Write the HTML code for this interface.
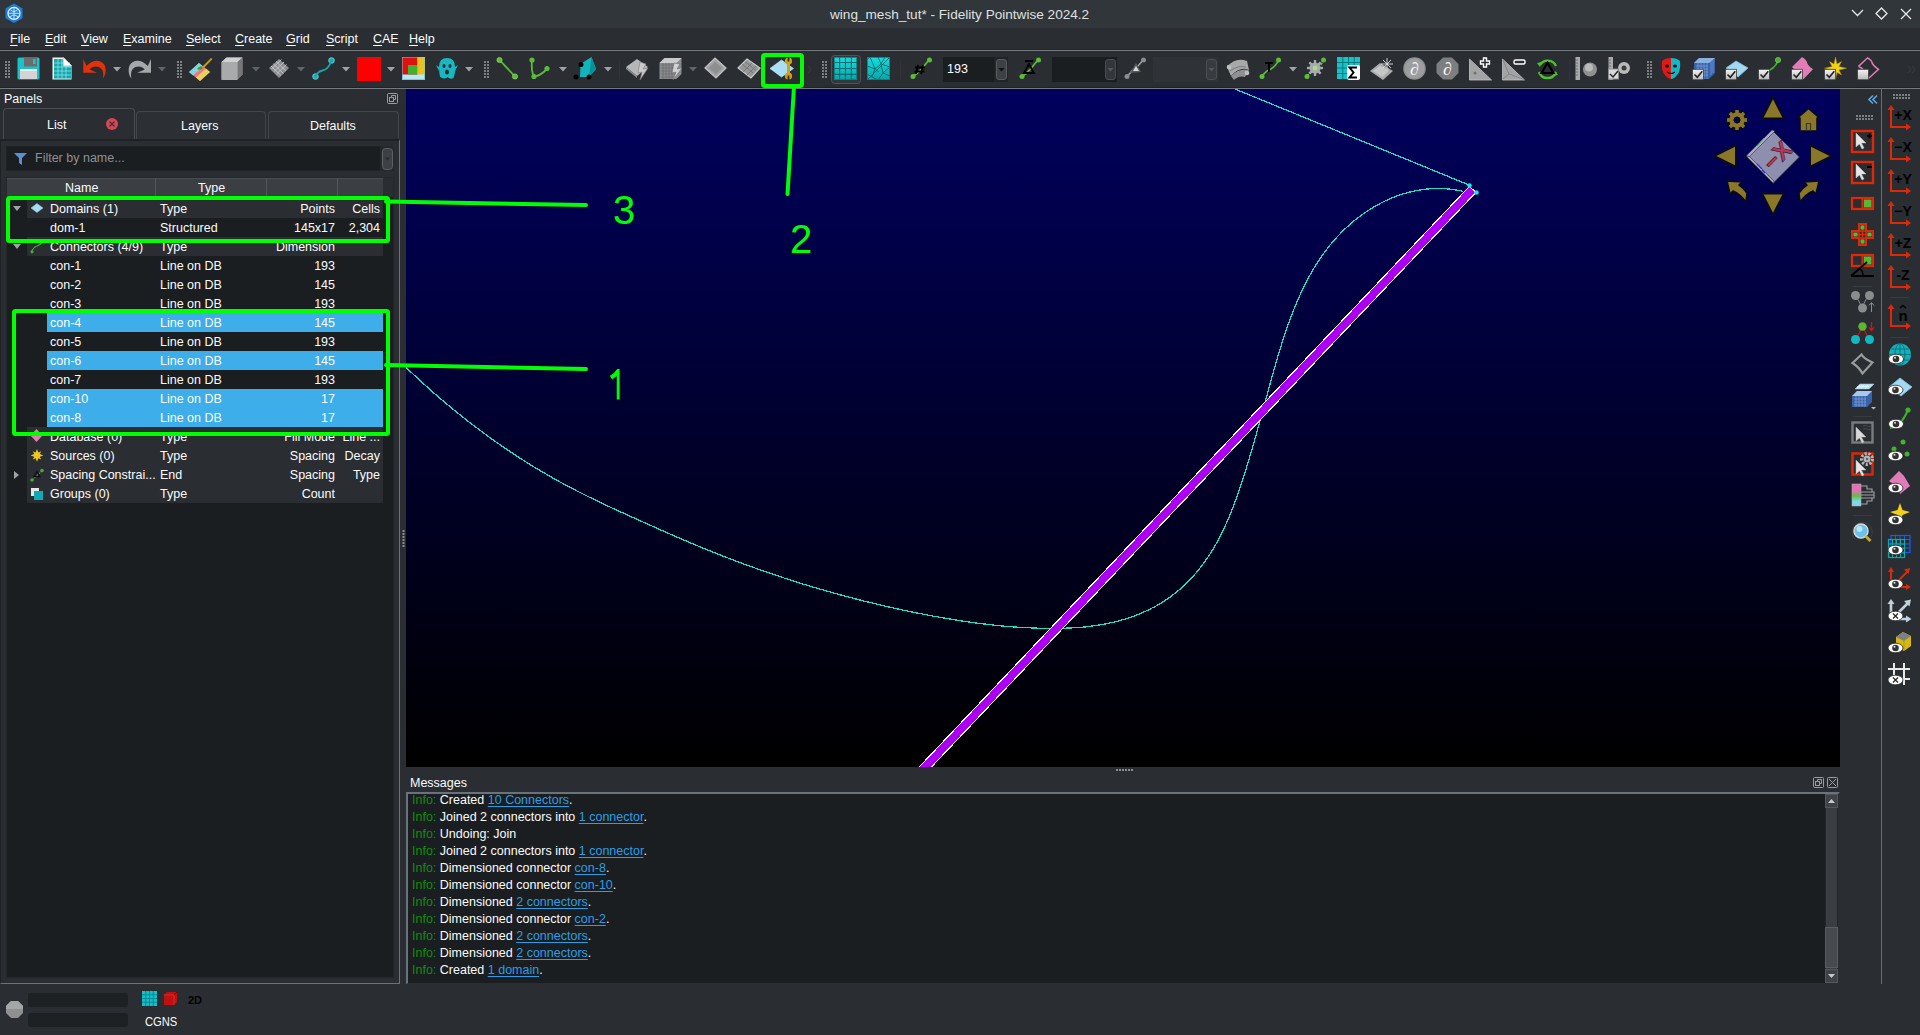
<!DOCTYPE html><html><head><meta charset="utf-8"><style>
*{margin:0;padding:0;box-sizing:border-box}
html,body{width:1920px;height:1035px;overflow:hidden;background:#2a2e32;font-family:"Liberation Sans", sans-serif;color:#fcfcfc;font-size:12.5px}
.a{position:absolute}
.t{position:absolute;white-space:nowrap;line-height:13px}
svg{position:absolute;overflow:visible}
.r{text-align:right}
</style></head><body><div class="a" style="left:0;top:0;width:1920px;height:28px;background:#31363b"></div>
<div class="t" style="left:830px;top:8px;font-size:13.6px;color:#dfe0e1">wing_mesh_tut* - Fidelity Pointwise 2024.2</div>
<svg style="left:0;top:0" width="1920" height="28">
<path d="M1852 10 l5.5 5.5 l5.5 -5.5" fill="none" stroke="#e8e8e8" stroke-width="1.3"/>
<path d="M1881.5 8 l5.5 5.5 l-5.5 5.5 l-5.5 -5.5 z" fill="none" stroke="#e8e8e8" stroke-width="1.3"/>
<path d="M1901 9 l10 10 M1911 9 l-10 10" fill="none" stroke="#e8e8e8" stroke-width="1.3"/>
<path d="M14 3.5 l8.5 4.9 v9.8 l-8.5 4.9 l-8.5 -4.9 v-9.8 z" fill="#1e7fd8"/>
<circle cx="14" cy="13.3" r="6" fill="none" stroke="#e6f2ff" stroke-width="1.2"/>
<path d="M8.5 13.3 h11 M14 7.3 v12 M10 9.5 q4 4 8 0 M10 17 q4 -4 8 0" fill="none" stroke="#e6f2ff" stroke-width="0.8"/>
</svg>
<div class="a" style="left:0;top:28px;width:1920px;height:22px;background:#2a2e32"></div>
<div class="t" style="left:10px;top:33px;font-size:12.5px"><u style="text-underline-offset:2px">F</u>ile</div>
<div class="t" style="left:45px;top:33px;font-size:12.5px"><u style="text-underline-offset:2px">E</u>dit</div>
<div class="t" style="left:81px;top:33px;font-size:12.5px"><u style="text-underline-offset:2px">V</u>iew</div>
<div class="t" style="left:123px;top:33px;font-size:12.5px"><u style="text-underline-offset:2px">E</u>xamine</div>
<div class="t" style="left:186px;top:33px;font-size:12.5px"><u style="text-underline-offset:2px">S</u>elect</div>
<div class="t" style="left:235px;top:33px;font-size:12.5px"><u style="text-underline-offset:2px">C</u>reate</div>
<div class="t" style="left:286px;top:33px;font-size:12.5px"><u style="text-underline-offset:2px">G</u>rid</div>
<div class="t" style="left:326px;top:33px;font-size:12.5px"><u style="text-underline-offset:2px">S</u>cript</div>
<div class="t" style="left:373px;top:33px;font-size:12.5px"><u style="text-underline-offset:2px">C</u>AE</div>
<div class="t" style="left:409px;top:33px;font-size:12.5px"><u style="text-underline-offset:2px">H</u>elp</div>
<div class="a" style="left:0;top:49px;width:1920px;height:1px;background:#222428"></div><div class="a" style="left:0;top:50px;width:1920px;height:1px;background:#74797d"></div>
<div class="a" style="left:0;top:51px;width:1920px;height:37px;background:#2a2e32"></div>
<div class="a" style="left:0;top:87px;width:1920px;height:1px;background:#1f2124"></div><div class="a" style="left:0;top:88px;width:1920px;height:1px;background:#74797d"></div>
<svg style="left:0;top:0" width="1920" height="90"><defs><linearGradient id="tg" x1="0" y1="0" x2="0" y2="1"><stop offset="0" stop-color="#14dede"/><stop offset="1" stop-color="#0aa4a8"/></linearGradient><linearGradient id="chkg" x1="0" y1="0" x2="0" y2="1"><stop offset="0" stop-color="#f4f4f4"/><stop offset="1" stop-color="#b8b8b8"/></linearGradient></defs><rect x="5" y="61" width="2" height="2" fill="#7d8083"/><rect x="8" y="61" width="2" height="2" fill="#7d8083"/><rect x="5" y="64" width="2" height="2" fill="#7d8083"/><rect x="8" y="64" width="2" height="2" fill="#7d8083"/><rect x="5" y="67" width="2" height="2" fill="#7d8083"/><rect x="8" y="67" width="2" height="2" fill="#7d8083"/><rect x="5" y="70" width="2" height="2" fill="#7d8083"/><rect x="8" y="70" width="2" height="2" fill="#7d8083"/><rect x="5" y="73" width="2" height="2" fill="#7d8083"/><rect x="8" y="73" width="2" height="2" fill="#7d8083"/><rect x="5" y="76" width="2" height="2" fill="#7d8083"/><rect x="8" y="76" width="2" height="2" fill="#7d8083"/><g transform="translate(17,57)"><rect x="0.5" y="0.5" width="22" height="22" rx="1.5" fill="#17c4c9"/>
<rect x="7" y="0.5" width="13" height="9" fill="#6c6c6c"/><rect x="16" y="2" width="2.5" height="5" fill="#17c4c9"/>
<rect x="3" y="12" width="17" height="10" fill="#d4d4d4"/><rect x="3" y="12" width="17" height="2" fill="#f0f0f0"/></g><g transform="translate(52,57)"><path d="M0.5 0.5 h11 l8 8 v14 h-19 z" fill="#f2f2f2"/>
<path d="M2 2 h9.5 v7.5 h7.5 v12 h-17 z" fill="#12a8b0"/>
<path d="M2 6 h16 M2 10 h17 M2 14 h17 M2 18 h17 M6 2 v20 M10 2 v20 M14 9 v13" stroke="#8fe0e6" stroke-width="0.8"/>
<path d="M11.5 0.5 v8 h8" fill="#ffffff" stroke="#cfcfcf" stroke-width="0.6"/></g><g transform="translate(83,57)"><path d="M0.3 2 L0.3 15.8 L14.1 15.8 L6.5 12.5 C 9.5 9, 15 8.5, 18.5 12 C 20.5 14, 20.5 18, 20 21.5 C 22.8 18, 23.5 12, 21.5 8 C 18.5 2.5, 10 1.5, 3.5 9 Z" fill="#e4300c"/></g><path d="M113 67 h8 l-4 4.5 z" fill="#a0a2a4"/><g transform="translate(128,57)"><g transform="translate(23.3,0) scale(-1,1)"><path d="M0.3 2 L0.3 15.8 L14.1 15.8 L6.5 12.5 C 9.5 9, 15 8.5, 18.5 12 C 20.5 14, 20.5 18, 20 21.5 C 22.8 18, 23.5 12, 21.5 8 C 18.5 2.5, 10 1.5, 3.5 9 Z" fill="#a6a9ac"/></g></g><path d="M158 67 h8 l-4 4.5 z" fill="#5f6469"/><rect x="177" y="61" width="2" height="2" fill="#7d8083"/><rect x="180" y="61" width="2" height="2" fill="#7d8083"/><rect x="177" y="64" width="2" height="2" fill="#7d8083"/><rect x="180" y="64" width="2" height="2" fill="#7d8083"/><rect x="177" y="67" width="2" height="2" fill="#7d8083"/><rect x="180" y="67" width="2" height="2" fill="#7d8083"/><rect x="177" y="70" width="2" height="2" fill="#7d8083"/><rect x="180" y="70" width="2" height="2" fill="#7d8083"/><rect x="177" y="73" width="2" height="2" fill="#7d8083"/><rect x="180" y="73" width="2" height="2" fill="#7d8083"/><rect x="177" y="76" width="2" height="2" fill="#7d8083"/><rect x="180" y="76" width="2" height="2" fill="#7d8083"/><g transform="translate(189,57)"><path d="M0 15 l10 -9 l11 9 l-10 9 z" fill="#f07878"/>
<path d="M0 15 l10 -9 l4 3.5 l-10 9 z" fill="#7ad8e0"/>
<path d="M11 24 l10 -9 l-4 -3.5 l-10 9 z" fill="#e8d060"/>
<path d="M8 12 q3 -4 6 -2 q-1 4 -6 2z" fill="#36a030"/>
<path d="M13 10 l9 -9 l1.5 1 l-9 9.5z" fill="#c89a20"/></g><g transform="translate(221,57)"><path d="M0.5 5 l5 -4.5 h16 v17 l-5 5 h-16 z" fill="#8e9092"/>
<path d="M0.5 5 l5 -4.5 h16 l-5 4.5 z" fill="#d0d2d4"/>
<path d="M16.5 5 l5 -4.5 v17 l-5 5 z" fill="#75777a"/>
<rect x="0.5" y="5" width="16" height="18" fill="#a8aaac"/></g><path d="M252 67 h8 l-4 4.5 z" fill="#5f6469"/><g transform="translate(268,57)"><path d="M1 11 l10 -9 l10 9 l-10 10 z" fill="#8b8d90"/>
<path d="M5.5 7 l10 9.5 M8 4.5 l10 9.5 M3 9 l10 9.5 M6 14.5 l10 -9.5 M3.5 12 l10 -9.5 M8.5 17 l10 -9.5" stroke="#c8cacc" stroke-width="0.9"/></g><path d="M297 67 h8 l-4 4.5 z" fill="#5f6469"/><g transform="translate(312,57)"><circle cx="19.5" cy="3.5" r="2.8" fill="#10b0b8" stroke="#7fe0e4" stroke-width="0.8"/><circle cx="3.5" cy="19.5" r="2.8" fill="#10b0b8" stroke="#7fe0e4" stroke-width="0.8"/>
<path d="M3.5 19.5 q2 -5 7 -6 q6 -1 9 -10" fill="none" stroke="#10a8b0" stroke-width="1.8"/></g><path d="M342 67 h8 l-4 4.5 z" fill="#a0a2a4"/><g transform="translate(357,57)"><rect x="0" y="0" width="24" height="24" fill="#ff0000"/></g><path d="M387 67 h8 l-4 4.5 z" fill="#a0a2a4"/><g transform="translate(402,57)"><rect x="0.5" y="0.5" width="22" height="22" fill="#b8e8f8" stroke="#7cc8e0"/>
<rect x="0.5" y="0.5" width="15" height="17" fill="#e01010"/><rect x="15.5" y="0.5" width="7" height="17" fill="#e8c020"/>
<rect x="6" y="8" width="9" height="9.5" fill="#40b030"/></g><g transform="translate(435,57)"><path d="M5 20 q-1 -6 -1 -10 q0 -9 8 -9 q8 0 8 9 l3 -2 l-2.5 5 q-1 5 -2 8 q-3 2 -6 -1 q-3 3 -7 0z" fill="#18b8c0"/>
<path d="M4 10 l-3 -2 l3 6z" fill="#18b8c0"/>
<ellipse cx="9" cy="9" rx="1.5" ry="2" fill="#1f2a30"/><ellipse cx="15" cy="9" rx="1.5" ry="2" fill="#1f2a30"/><ellipse cx="12" cy="15" rx="2" ry="2.5" fill="#1f2a30"/></g><path d="M465 67 h8 l-4 4.5 z" fill="#a0a2a4"/><rect x="484" y="61" width="2" height="2" fill="#7d8083"/><rect x="487" y="61" width="2" height="2" fill="#7d8083"/><rect x="484" y="64" width="2" height="2" fill="#7d8083"/><rect x="487" y="64" width="2" height="2" fill="#7d8083"/><rect x="484" y="67" width="2" height="2" fill="#7d8083"/><rect x="487" y="67" width="2" height="2" fill="#7d8083"/><rect x="484" y="70" width="2" height="2" fill="#7d8083"/><rect x="487" y="70" width="2" height="2" fill="#7d8083"/><rect x="484" y="73" width="2" height="2" fill="#7d8083"/><rect x="487" y="73" width="2" height="2" fill="#7d8083"/><rect x="484" y="76" width="2" height="2" fill="#7d8083"/><rect x="487" y="76" width="2" height="2" fill="#7d8083"/><g transform="translate(496,57)"><path d="M3.5 3 L19 19.5" stroke="#5dbb3a" stroke-width="1.8"/><circle cx="3.5" cy="3" r="2.6" fill="#5dbb3a" stroke="#9ee07a" stroke-width="0.6"/><circle cx="19" cy="19.5" r="2.6" fill="#5dbb3a" stroke="#9ee07a" stroke-width="0.6"/></g><g transform="translate(529,57)"><path d="M3 3 Q2 15 5 19 Q10 20 18 12" fill="none" stroke="#5dbb3a" stroke-width="1.8"/><circle cx="3" cy="3" r="2.6" fill="#5dbb3a"/><circle cx="5" cy="19.5" r="2.6" fill="#5dbb3a"/><circle cx="18" cy="11.5" r="2.6" fill="#5dbb3a"/></g><path d="M559 67 h8 l-4 4.5 z" fill="#a0a2a4"/><g transform="translate(574,57)"><path d="M6.5 7 l11 -7 l4.5 12 l-7 8 h-9z" fill="#12b4bc"/><path d="M17.5 0 l4.5 12 l-7 8z" fill="#0a8f98"/>
<circle cx="7" cy="7.5" r="2.5" fill="#000"/><circle cx="2" cy="20" r="2.5" fill="#000"/><circle cx="15" cy="20" r="2.5" fill="#000"/></g><path d="M604 67 h8 l-4 4.5 z" fill="#a0a2a4"/><rect x="619" y="60" width="1" height="19" fill="#303337"/><g transform="translate(626,57)"><path d="M0 10 l11 -8 l11 8 l-11 9 z" fill="#b4b6b8"/><path d="M0 10 l11 9 v2 l-11 -9z" fill="#8a8c8e"/>
<path d="M14 5 l6 2 l-3 5 l5 -1 l-8 12 l2 -8 l-4 1z" fill="#c8cacc" stroke="#7a7c7e" stroke-width="0.6"/></g><g transform="translate(659,57)"><path d="M0.5 6 l5 -5 h17 v16 l-5 5 h-17z" fill="#8a8c8e"/><path d="M0.5 6 l5 -5 h17 l-5 5z" fill="#c8cacc"/>
<path d="M2 8 h14 M2 11 h14 M2 14 h14 M2 17 h14 M2 20 h14 M4 6 v16 M7 6 v16 M10 6 v16 M13 6 v16" stroke="#6a6c6e" stroke-width="0.7"/>
<path d="M15 6 l6 1 l-3 5 l5 -1 l-9 12 l3 -8 l-4 1z" fill="#d0d2d4" stroke="#6a6c6e" stroke-width="0.6"/></g><path d="M689 67 h8 l-4 4.5 z" fill="#5f6469"/><g transform="translate(705,57)"><path d="M0 11 l10 -10 l11 10 l-10 10 z" fill="#a0a2a4" stroke="#c2c4c6" stroke-width="1.2"/><path d="M4 11 l6 -6 l7 6 l-6 6z" fill="#8c8e90"/></g><g transform="translate(738,57)"><path d="M0 11 l9 -9 l13 9 l-9 10 z" fill="#959799" stroke="#c8cacc" stroke-width="1.2"/>
<path d="M4 7 l11 9 M7 4.5 l11 9 M5 15 l9 -9 M9 18 l9 -9" stroke="#6e7072" stroke-width="0.8"/></g><g transform="translate(770,57)"><path d="M0 11.5 l11.5 -8.5 l12 8.5 l-12 8.5 z" fill="#a8dff4" stroke="#c8ecfa" stroke-width="0.6"/>
<rect x="17" y="6" width="3" height="11" fill="#d4a010"/>
<circle cx="18.5" cy="4" r="3.6" fill="#d4a010"/><circle cx="18.5" cy="19" r="3.6" fill="#d4a010"/>
<rect x="17.6" y="0" width="1.8" height="4.5" fill="#2a2e32"/><rect x="17.6" y="18.5" width="1.8" height="5" fill="#2a2e32"/></g><rect x="822" y="61" width="2" height="2" fill="#7d8083"/><rect x="825" y="61" width="2" height="2" fill="#7d8083"/><rect x="822" y="64" width="2" height="2" fill="#7d8083"/><rect x="825" y="64" width="2" height="2" fill="#7d8083"/><rect x="822" y="67" width="2" height="2" fill="#7d8083"/><rect x="825" y="67" width="2" height="2" fill="#7d8083"/><rect x="822" y="70" width="2" height="2" fill="#7d8083"/><rect x="825" y="70" width="2" height="2" fill="#7d8083"/><rect x="822" y="73" width="2" height="2" fill="#7d8083"/><rect x="825" y="73" width="2" height="2" fill="#7d8083"/><rect x="822" y="76" width="2" height="2" fill="#7d8083"/><rect x="825" y="76" width="2" height="2" fill="#7d8083"/><rect x="831.5" y="55.5" width="29" height="28" rx="3" fill="#33363a" stroke="#505458"/><g transform="translate(834,57)"><rect x="0" y="0" width="23" height="23" fill="url(#tg)"/><path d="M5.6 0 v23 M11.5 0 v23 M17.4 0 v23 M0 5.5 h23 M0 11.5 h23 M0 17.4 h23" stroke="#086c72" stroke-width="1.1"/><rect x="0.5" y="0.5" width="22" height="22" fill="none" stroke="#0a7a80" stroke-width="0.8"/></g><g transform="translate(867,57)"><rect x="0" y="0" width="23" height="23" fill="url(#tg)"/><path d="M0 23 L23 0 M3 0 L8 12 L0 9 M8 12 L14 7 L11 0 M14 7 L23 10 M14 7 L16 16 L23 10 M16 16 L11 23 M16 16 L23 19 M8 12 L5 20 L0 17 M5 20 L11 23 M8 12 L12 15 M18 0 L14 7 M0 3 L3 0" fill="none" stroke="#086c72" stroke-width="0.9"/><rect x="0.5" y="0.5" width="22" height="22" fill="none" stroke="#0a7a80" stroke-width="0.8"/></g><rect x="900" y="60" width="1" height="19" fill="#303337"/><g transform="translate(910,57)"><path d="M3 19.5 q5 -3 9 -8 q4 -5 7 -8.5" fill="none" stroke="#5dbb3a" stroke-width="1.8"/><circle cx="19.5" cy="3" r="2.5" fill="#5dbb3a"/><circle cx="3" cy="19.5" r="2.5" fill="#5dbb3a"/>
<path d="M8 8 l-2 9 M13 8 l-2 9 M5 10.5 h10 M4.5 14.5 h10" stroke="#000" stroke-width="1.8"/></g><g transform="translate(1019,57)"><path d="M3 19.5 q5 -3 9 -8 q4 -5 7 -8.5" fill="none" stroke="#5dbb3a" stroke-width="1.8"/><circle cx="19.5" cy="3" r="2.5" fill="#5dbb3a"/><circle cx="3" cy="19.5" r="2.5" fill="#5dbb3a"/>
<path d="M6 4 h8 M10 7 l-5 9 h10z" fill="none" stroke="#000" stroke-width="1.8"/></g><g transform="translate(1124,57)"><path d="M3 19.5 q4 -4 6 -7 M13 10 q3 -3 6 -7" fill="none" stroke="#9a9c9e" stroke-width="1.6"/><circle cx="19.5" cy="3" r="2.5" fill="#8a8c8e"/><circle cx="3" cy="19.5" r="2.5" fill="#8a8c8e"/>
<path d="M6 16 l6 -10 l5 9z" fill="#585b5e"/><path d="M9 14 l3 -5 l3 5z" fill="#d8d8d8"/></g><g transform="translate(1226,57)"><path d="M1 10 q8 -10 20 -6 l2 9 q-9 -4 -18 6z" fill="#a6a8aa"/><path d="M5 19 q8 -8 18 -6 l-4 7 q-6 -2 -11 3z" fill="#8e9092"/>
<circle cx="3" cy="10" r="2.3" fill="#bcbec0"/><circle cx="21" cy="16" r="2.3" fill="#bcbec0"/><path d="M4 14 q8 -6 16 -4" fill="none" stroke="#6e7072" stroke-width="0.8"/></g><g transform="translate(1259,57)"><path d="M3 19.5 q3 -5 8 -7 q6 -3 8.5 -9.5" fill="none" stroke="#5dbb3a" stroke-width="1.8"/><circle cx="19.5" cy="3" r="2.5" fill="#5dbb3a"/><circle cx="3" cy="19.5" r="2.5" fill="#5dbb3a"/>
<path d="M6 6 h8 M10 6 v9" stroke="#000" stroke-width="2"/></g><path d="M1289 67 h8 l-4 4.5 z" fill="#a0a2a4"/><g transform="translate(1304,57)"><path d="M3 19.5 q3 -5 8 -7 q6 -3 8.5 -9.5" fill="none" stroke="#5dbb3a" stroke-width="1.6" stroke-dasharray="3 1.5"/><circle cx="19.5" cy="3" r="2.5" fill="#5dbb3a"/><circle cx="3" cy="19.5" r="2.5" fill="#5dbb3a"/>
<rect x="9.8" y="3" width="2.4" height="4" transform="rotate(0 11 11)" fill="#a8aaac"/><rect x="9.8" y="3" width="2.4" height="4" transform="rotate(45 11 11)" fill="#a8aaac"/><rect x="9.8" y="3" width="2.4" height="4" transform="rotate(90 11 11)" fill="#a8aaac"/><rect x="9.8" y="3" width="2.4" height="4" transform="rotate(135 11 11)" fill="#a8aaac"/><rect x="9.8" y="3" width="2.4" height="4" transform="rotate(180 11 11)" fill="#a8aaac"/><rect x="9.8" y="3" width="2.4" height="4" transform="rotate(225 11 11)" fill="#a8aaac"/><rect x="9.8" y="3" width="2.4" height="4" transform="rotate(270 11 11)" fill="#a8aaac"/><rect x="9.8" y="3" width="2.4" height="4" transform="rotate(315 11 11)" fill="#a8aaac"/><circle cx="11" cy="11" r="5.5" fill="#a8aaac"/><circle cx="11" cy="11" r="2.3" fill="#a8e090"/></g><g transform="translate(1337,57)"><rect x="0" y="0" width="23" height="22" fill="#15c2c8"/><path d="M5.75 0 v22 M11.5 0 v22 M17.25 0 v22 M0 5.5 h23 M0 11 h23 M0 16.5 h23" stroke="#0a7a82" stroke-width="1"/>
<rect x="10" y="8" width="13" height="15" rx="2" fill="#ffffff"/><path d="M20 10.5 h-7.5 l4 5 l-4 5 h7.5" fill="none" stroke="#000" stroke-width="2"/></g><g transform="translate(1370,57)"><path d="M0 14 l10 -8 l13 8 l-10 9 z" fill="#a8aaac"/><path d="M3 14 l7 -5.5 l9 5.5 l-7 6z" fill="#c4c6c8"/>
<path d="M17 1 v12 M11 7 h12 M13 3 l8 8 M21 3 l-8 8" stroke="#e0e2e4" stroke-width="0.9"/></g><g transform="translate(1403,57)"><circle cx="11.5" cy="11.5" r="11.3" fill="#8c8e90"/><circle cx="11.5" cy="11.5" r="10" fill="#9c9ea0"/>
<text x="11.5" y="18" font-family="Liberation Serif" font-style="italic" font-size="18" text-anchor="middle" fill="#f4f4f4">∂</text></g><g transform="translate(1436,57)"><path d="M7 0.5 h9 l6.5 6.5 v9 l-6.5 6.5 h-9 l-6.5 -6.5 v-9z" fill="#7c7e80"/>
<text x="11.5" y="18" font-family="Liberation Serif" font-style="italic" font-size="18" text-anchor="middle" fill="#f4f4f4">∂</text></g><g transform="translate(1469,57)"><path d="M0.5 2 v21 h22z" fill="#a2a4a6" stroke="#c0c2c4" stroke-width="0.8"/><circle cx="6" cy="16" r="1.5" fill="#707274"/>
<path d="M14.5 1 h3 v3 h3 v3 h-3 v3 h-3 v-3 h-3 v-3 h3z" fill="#2a2e32" stroke="#ffffff" stroke-width="1.4"/></g><g transform="translate(1502,57)"><path d="M0.5 2 v21 h22z" fill="#a2a4a6" stroke="#c0c2c4" stroke-width="0.8"/><path d="M1 3 l6 14 l-6 5 M7 17 l15 5.5" stroke="#7a7c7e" stroke-width="0.8" fill="none"/>
<rect x="12" y="3" width="11" height="4" rx="1.5" fill="#2a2e32" stroke="#ffffff" stroke-width="1.4"/></g><g transform="translate(1536,57)"><path d="M4 8 a9 9 0 0 1 16 1 M20 15 a9 9 0 0 1 -17 0" fill="none" stroke="#4cc030" stroke-width="2.4"/>
<path d="M1 6 l5 -1 l-2 5z M22 18 l-5 1 l2 -5z" fill="#4cc030"/><path d="M11.5 6 l-6 10 h12z" fill="none" stroke="#000" stroke-width="2.2"/></g><rect x="1569" y="60" width="1" height="19" fill="#303337"/><g transform="translate(1575,57)"><rect x="0.5" y="0" width="4.5" height="23" fill="#a8aaac"/><path d="M1 3 h2 M1 6 h2 M1 9 h2 M1 12 h2 M1 15 h2 M1 18 h2" stroke="#6e7072"/>
<circle cx="15" cy="12.5" r="7" fill="#8e9092"/><circle cx="14" cy="10.5" r="4" fill="#b8babc"/></g><g transform="translate(1608,57)"><rect x="0.5" y="0" width="4.5" height="23" fill="#a8aaac"/><path d="M1 3 h2 M1 6 h2 M1 9 h2" stroke="#6e7072"/>
<circle cx="16" cy="11" r="6" fill="#b8babc"/><circle cx="16" cy="11" r="2.5" fill="#3a3c3e"/>
<rect x="0.5" y="12" width="10" height="10" fill="#d8d8d8" stroke="#8a8c8e"/><path d="M2 17 l3 3 l5 -6" fill="none" stroke="#222" stroke-width="1.4"/></g><rect x="1647" y="61" width="2" height="2" fill="#7d8083"/><rect x="1650" y="61" width="2" height="2" fill="#7d8083"/><rect x="1647" y="64" width="2" height="2" fill="#7d8083"/><rect x="1650" y="64" width="2" height="2" fill="#7d8083"/><rect x="1647" y="67" width="2" height="2" fill="#7d8083"/><rect x="1650" y="67" width="2" height="2" fill="#7d8083"/><rect x="1647" y="70" width="2" height="2" fill="#7d8083"/><rect x="1650" y="70" width="2" height="2" fill="#7d8083"/><rect x="1647" y="73" width="2" height="2" fill="#7d8083"/><rect x="1650" y="73" width="2" height="2" fill="#7d8083"/><rect x="1647" y="76" width="2" height="2" fill="#7d8083"/><rect x="1650" y="76" width="2" height="2" fill="#7d8083"/><g transform="translate(1661,57)"><path d="M10 1 q-6 0 -9 3 q-1 10 3 14 q3 4 6 4z" fill="#e01818"/><path d="M10 1 q6 0 9 3 q1 10 -3 14 q-3 4 -6 4z" fill="#12b8c4"/>
<ellipse cx="6" cy="9" rx="2" ry="1.5" fill="#111"/><ellipse cx="14" cy="9" rx="2" ry="1.5" fill="#111"/><path d="M6 15 q4 3 8 0" fill="none" stroke="#111" stroke-width="1.2"/></g><g transform="translate(1692,57)"><path d="M2 6 l5 -5 h16 v15 l-6 6 h-15z" fill="#3a62a8"/><path d="M2 6 l5 -5 h16 l-6 5z" fill="#8cb0e0"/>
<path d="M4 9 h12 M4 12 h12 M4 15 h12 M4 18 h12 M6 6 v16 M9 6 v16 M12 6 v16 M15 6 v16 M19 4 v14 M21 3 v13" stroke="#8cb0e0" stroke-width="0.6"/><rect x="0.5" y="12.3" width="11" height="10.5" fill="url(#chkg)" stroke="#3a3d40" stroke-width="0.8"/><path d="M2.5 17.5 l2.8 2.8 l5 -6" fill="none" stroke="#222" stroke-width="1.6"/></g><g transform="translate(1725,57)"><path d="M1 11 l10 -7 l12 7 l-10 9z" fill="#a4d8f0" stroke="#7ac0e0" stroke-width="0.8"/><rect x="0.5" y="12.3" width="11" height="10.5" fill="url(#chkg)" stroke="#3a3d40" stroke-width="0.8"/><path d="M2.5 17.5 l2.8 2.8 l5 -6" fill="none" stroke="#222" stroke-width="1.6"/></g><g transform="translate(1758,57)"><path d="M8 14 q8 -1 12 -10" fill="none" stroke="#40b030" stroke-width="1.8"/><circle cx="20" cy="3" r="2.6" fill="#40b030" stroke="#90e070" stroke-width="0.6"/><rect x="0.5" y="12.3" width="11" height="10.5" fill="url(#chkg)" stroke="#3a3d40" stroke-width="0.8"/><path d="M2.5 17.5 l2.8 2.8 l5 -6" fill="none" stroke="#222" stroke-width="1.6"/></g><g transform="translate(1791,57)"><path d="M1 10 L11 0 Q15 2 16 5 Q16 8 22 12.3 L12.4 22.2 Z" fill="#e27cb6"/><rect x="0.5" y="12.3" width="11" height="10.5" fill="url(#chkg)" stroke="#3a3d40" stroke-width="0.8"/><path d="M2.5 17.5 l2.8 2.8 l5 -6" fill="none" stroke="#222" stroke-width="1.6"/></g><g transform="translate(1824,57)"><path d="M11.5 0 L13 7 L17.5 4.5 L15 9.5 L22.5 11.2 L15 13 L17.5 18 L13 15.5 L11.5 22.5 L10 15.5 L5.5 18 L8 13 L0.5 11.2 L8 9.5 L5.5 4.5 L10 7 Z" fill="#f0d018" stroke="#a88a00" stroke-width="0.5"/><rect x="0.5" y="12.3" width="11" height="10.5" fill="url(#chkg)" stroke="#3a3d40" stroke-width="0.8"/><path d="M2.5 17.5 l2.8 2.8 l5 -6" fill="none" stroke="#222" stroke-width="1.6"/></g><g transform="translate(1857,57)"><path d="M1.5 9.4 L10.6 0.8 Q14.5 3 15 5.5 Q15.5 8 21.5 12.3 L11.7 21.2 L10 19 M1.5 9.4 L6 12" fill="none" stroke="#e27cb6" stroke-width="1.5"/><rect x="0.5" y="12.3" width="11" height="10.5" fill="url(#chkg)" stroke="#3a3d40" stroke-width="0.8"/></g><rect x="943" y="57" width="65" height="25" fill="#1b1e20"/><rect x="994" y="57" width="14" height="25" fill="#222528"/><rect x="996.5" y="59.5" width="10" height="20" rx="2.5" fill="#3d4145" stroke="#5a5e62"/><path d="M998.5 68 h6 l-3 3.5z" fill="#111"/><rect x="1052" y="57" width="65" height="25" fill="#1b1e20"/><rect x="1105.5" y="59.5" width="10" height="20" rx="2.5" fill="#33373b" stroke="#4a4e52"/><path d="M1107.5 68 h6 l-3 3.5z" fill="#55595d"/><rect x="1153" y="57" width="65" height="25" fill="#2f3337"/><rect x="1206.5" y="59.5" width="10" height="20" rx="2.5" fill="#383c40" stroke="#4a4e52"/><path d="M1208.5 68 h6 l-3 3.5z" fill="#55595d"/><path d="M808 66 l3 3.5 l-3 3.5 M1908 66 l3 3.5 l-3 3.5 M1912 66 l3 3.5 l-3 3.5" fill="none" stroke="#3a3e42" stroke-width="1"/></svg><div class="t" style="left:947px;top:63px;font-size:12.5px">193</div>
<div class="a" style="left:0;top:89px;width:400px;height:895px;background:#2a2e32"></div>
<div class="a" style="left:400px;top:89px;width:6px;height:895px;background:#2a2e32"></div>
<svg style="left:402px;top:529px" width="3" height="19"><path d="M1.5 1 v17" stroke="#8a8c8e" stroke-width="2" stroke-dasharray="2 1"/></svg>
<div class="t" style="left:4px;top:93px;font-size:12.5px">Panels</div>
<svg style="left:386px;top:92px" width="13" height="13"><rect x="1.5" y="1.5" width="10" height="10" fill="none" stroke="#9a9c9e" stroke-width="1" rx="1"/><rect x="3.5" y="5.5" width="4" height="4" fill="none" stroke="#9a9c9e"/><path d="M5.5 5.5 v-2 h4 v4 h-2" fill="none" stroke="#9a9c9e"/></svg>
<div class="a" style="left:0px;top:139px;width:400px;height:845px;background:#2a2e32;border-top:2px solid #1f2225;border-left:1px solid #1f2225;border-right:1px solid #68737e;border-bottom:1px solid #68737e"></div>
<div class="a" style="left:3px;top:108px;width:132px;height:31px;border:1px solid #4a4e52;border-bottom:none;border-radius:4px 4px 0 0;background:#2a2e32"></div>
<div class="a" style="left:136px;top:111px;width:130px;height:28px;border:1px solid #43474b;border-bottom:none;border-radius:4px 4px 0 0;background:#2c3034"></div>
<div class="a" style="left:268px;top:111px;width:131px;height:28px;border:1px solid #43474b;border-bottom:none;border-radius:4px 4px 0 0;background:#2c3034"></div>
<div class="t" style="left:47px;top:119px">List</div>
<div class="t" style="left:181px;top:120px">Layers</div>
<div class="t" style="left:310px;top:120px">Defaults</div>
<svg style="left:105px;top:117px" width="14" height="14"><circle cx="7" cy="7" r="6" fill="#da4453"/><path d="M4.5 4.5 l5 5 M9.5 4.5 l-5 5" stroke="#31363b" stroke-width="1.2"/></svg>
<div class="a" style="left:6px;top:146px;width:388px;height:25px;background:#1b1e20;border:1px solid #202326"></div>
<svg style="left:13px;top:151px" width="16" height="16"><path d="M1 2 h13 l-5 5 v7 l-3 -2 v-5 z" fill="#5b8fd2"/></svg>
<div class="t" style="left:35px;top:152px;color:#8d9093">Filter by name...</div>
<div class="a" style="left:380px;top:146px;width:14px;height:25px;background:#25282b"></div>
<svg style="left:382px;top:148px" width="11" height="22"><rect x="0.5" y="0.5" width="10" height="21" rx="3" fill="#3d4145" stroke="#5e6266"/><path d="M2.5 9.5 h6 l-3 3z" fill="#2a2d30"/></svg>
<div class="a" style="left:6px;top:177px;width:388px;height:801px;background:#1b1e20;border:1px solid #25282b"></div>
<div class="a" style="left:7px;top:178px;width:376px;height:19px;background:#3b3f44;border-top:1px solid #4a4e53"></div>
<div class="a" style="left:383px;top:178px;width:10px;height:19px;background:#2a2e32"></div>
<div class="a" style="left:155px;top:178px;width:1px;height:19px;background:#53575b"></div>
<div class="a" style="left:266px;top:178px;width:1px;height:19px;background:#53575b"></div>
<div class="a" style="left:337px;top:178px;width:1px;height:19px;background:#53575b"></div>
<div class="t" style="left:65px;top:182px">Name</div>
<div class="t" style="left:198px;top:182px">Type</div>
<div class="a" style="left:27px;top:199px;width:356px;height:19px;background:#2a2e32"></div>
<svg style="left:12px;top:205px" width="10" height="8"><path d="M1 1 h8 l-4 5 z" fill="#a0a2a4"/></svg>
<svg style="left:30px;top:202px" width="14" height="14"><path d="M1 6 l6 -4.5 l6 4.5 l-6 4.5 z" fill="#a8dcf0" stroke="#7cc4e4" stroke-width="0.6"/></svg>
<div class="t" style="left:50px;top:203px">Domains (1)</div>
<div class="t" style="left:160px;top:203px">Type</div>
<div class="t r" style="left:235px;width:100px;top:203px">Points</div>
<div class="t r" style="left:300px;width:80px;top:203px">Cells</div>
<div class="t" style="left:50px;top:222px">dom-1</div>
<div class="t" style="left:160px;top:222px">Structured</div>
<div class="t r" style="left:235px;width:100px;top:222px">145x17</div>
<div class="t r" style="left:300px;width:80px;top:222px">2,304</div>
<div class="a" style="left:27px;top:237px;width:356px;height:19px;background:#2a2e32"></div>
<svg style="left:12px;top:243px" width="10" height="8"><path d="M1 1 h8 l-4 5 z" fill="#a0a2a4"/></svg>
<svg style="left:30px;top:240px" width="14" height="14"><path d="M1.5 12 q2 -5 5.5 -6 q3 -1 5.5 -4" fill="none" stroke="#4aa83a" stroke-width="1.3"/><circle cx="2" cy="11.8" r="1.6" fill="#4aa83a"/></svg>
<div class="t" style="left:50px;top:241px">Connectors (4/9)</div>
<div class="t" style="left:160px;top:241px">Type</div>
<div class="t r" style="left:235px;width:100px;top:241px">Dimension</div>
<div class="t" style="left:50px;top:260px">con-1</div>
<div class="t" style="left:160px;top:260px">Line on DB</div>
<div class="t r" style="left:235px;width:100px;top:260px">193</div>
<div class="t" style="left:50px;top:279px">con-2</div>
<div class="t" style="left:160px;top:279px">Line on DB</div>
<div class="t r" style="left:235px;width:100px;top:279px">145</div>
<div class="t" style="left:50px;top:298px">con-3</div>
<div class="t" style="left:160px;top:298px">Line on DB</div>
<div class="t r" style="left:235px;width:100px;top:298px">193</div>
<div class="a" style="left:47px;top:313px;width:336px;height:19px;background:#3daee9"></div>
<div class="t" style="left:50px;top:317px">con-4</div>
<div class="t" style="left:160px;top:317px">Line on DB</div>
<div class="t r" style="left:235px;width:100px;top:317px">145</div>
<div class="t" style="left:50px;top:336px">con-5</div>
<div class="t" style="left:160px;top:336px">Line on DB</div>
<div class="t r" style="left:235px;width:100px;top:336px">193</div>
<div class="a" style="left:47px;top:351px;width:336px;height:19px;background:#3daee9"></div>
<div class="t" style="left:50px;top:355px">con-6</div>
<div class="t" style="left:160px;top:355px">Line on DB</div>
<div class="t r" style="left:235px;width:100px;top:355px">145</div>
<div class="t" style="left:50px;top:374px">con-7</div>
<div class="t" style="left:160px;top:374px">Line on DB</div>
<div class="t r" style="left:235px;width:100px;top:374px">193</div>
<div class="a" style="left:47px;top:389px;width:336px;height:19px;background:#3daee9"></div>
<div class="t" style="left:50px;top:393px">con-10</div>
<div class="t" style="left:160px;top:393px">Line on DB</div>
<div class="t r" style="left:235px;width:100px;top:393px">17</div>
<div class="a" style="left:47px;top:408px;width:336px;height:19px;background:#3daee9"></div>
<div class="t" style="left:50px;top:412px">con-8</div>
<div class="t" style="left:160px;top:412px">Line on DB</div>
<div class="t r" style="left:235px;width:100px;top:412px">17</div>
<div class="a" style="left:27px;top:427px;width:356px;height:19px;background:#2a2e32"></div>
<svg style="left:30px;top:430px" width="14" height="14"><path d="M0.5 5.5 l6 -6.5 l6 6.5 l-6 6.5 z" fill="#e07ab0"/></svg>
<div class="t" style="left:50px;top:431px">Database (0)</div>
<div class="t" style="left:160px;top:431px">Type</div>
<div class="t r" style="left:235px;width:100px;top:431px">Fill Mode</div>
<div class="t r" style="left:300px;width:80px;top:431px">Line ...</div>
<div class="a" style="left:27px;top:446px;width:356px;height:19px;background:#2a2e32"></div>
<svg style="left:30px;top:449px" width="14" height="14"><path d="M7 0 l1.4 3.6 l2.8 -1.4 l-1.4 2.8 l3.6 1.4 l-3.6 1.4 l1.4 2.8 l-2.8 -1.4 l-1.4 3.6 l-1.4 -3.6 l-2.8 1.4 l1.4 -2.8 l-3.6 -1.4 l3.6 -1.4 l-1.4 -2.8 l2.8 1.4 z" fill="#f0c818"/></svg>
<div class="t" style="left:50px;top:450px">Sources (0)</div>
<div class="t" style="left:160px;top:450px">Type</div>
<div class="t r" style="left:235px;width:100px;top:450px">Spacing</div>
<div class="t r" style="left:300px;width:80px;top:450px">Decay</div>
<div class="a" style="left:27px;top:465px;width:356px;height:19px;background:#2a2e32"></div>
<svg style="left:13px;top:470px" width="8" height="10"><path d="M1 1 v8 l5 -4 z" fill="#a0a2a4"/></svg>
<svg style="left:30px;top:468px" width="14" height="14"><path d="M2 12 L12 3" fill="none" stroke="#4aa83a" stroke-width="1.2" stroke-dasharray="2 1"/><circle cx="2" cy="12" r="1.8" fill="#4aa83a"/><circle cx="12" cy="2.5" r="1.8" fill="#4aa83a"/><path d="M7 3.5 l-3 5 h6z" fill="none" stroke="#111" stroke-width="1.3"/></svg>
<div class="t" style="left:50px;top:469px">Spacing Constrai...</div>
<div class="t" style="left:160px;top:469px">End</div>
<div class="t r" style="left:235px;width:100px;top:469px">Spacing</div>
<div class="t r" style="left:300px;width:80px;top:469px">Type</div>
<div class="a" style="left:27px;top:484px;width:356px;height:19px;background:#2a2e32"></div>
<svg style="left:30px;top:487px" width="14" height="14"><rect x="1" y="1" width="8" height="8" fill="#e8e8e8"/><rect x="4" y="4" width="9" height="9" fill="#12a8b4"/></svg>
<div class="t" style="left:50px;top:488px">Groups (0)</div>
<div class="t" style="left:160px;top:488px">Type</div>
<div class="t r" style="left:235px;width:100px;top:488px">Count</div>
<svg style="left:406px;top:89px" width="1434" height="678" viewBox="406 89 1434 678">
<defs><linearGradient id="vg" x1="0" y1="0" x2="0" y2="1">
<stop offset="0" stop-color="#00005e"/><stop offset="0.5" stop-color="#00002e"/><stop offset="1" stop-color="#000000"/></linearGradient>
<clipPath id="vc"><rect x="406" y="89" width="1434" height="678"/></clipPath></defs>
<rect x="406" y="89" width="1434" height="678" fill="url(#vg)"/>
<g clip-path="url(#vc)">
<path d="M1235 89 L1469 185" stroke="#1ee0c0" stroke-width="1.25" fill="none" shape-rendering="crispEdges"/>
<path d="M396.2 357.8 L397.8 359.4 L399.5 361.1 L401.1 362.7 L402.8 364.3 L404.5 365.9 L406.1 367.5 L407.8 369.1 L409.5 370.7 L411.2 372.3 L412.9 373.9 L414.6 375.5 L416.3 377.1 L418.0 378.7 L419.7 380.3 L421.4 381.8 L423.1 383.4 L424.8 384.9 L426.6 386.5 L428.3 388.0 L430.0 389.6 L431.8 391.1 L433.5 392.7 L435.3 394.2 L437.0 395.7 L438.8 397.2 L440.6 398.8 L442.3 400.3 L444.1 401.8 L445.9 403.3 L447.7 404.8 L449.4 406.2 L451.2 407.7 L453.0 409.2 L454.8 410.7 L456.6 412.1 L458.4 413.6 L460.3 415.1 L462.1 416.5 L463.9 418.0 L465.7 419.4 L467.5 420.8 L469.4 422.3 L471.2 423.7 L473.1 425.1 L474.9 426.5 L476.8 427.9 L478.6 429.3 L480.5 430.7 L482.3 432.1 L484.2 433.5 L486.1 434.8 L488.0 436.2 L489.9 437.6 L491.7 438.9 L493.6 440.3 L495.5 441.6 L497.4 442.9 L499.3 444.3 L501.2 445.6 L503.1 446.9 L505.1 448.2 L507.0 449.5 L508.9 450.8 L510.8 452.1 L512.8 453.4 L514.7 454.7 L516.7 456.0 L518.6 457.2 L520.5 458.5 L522.5 459.7 L524.5 461.0 L526.4 462.2 L528.4 463.4 L530.4 464.7 L532.3 465.9 L534.3 467.1 L536.3 468.3 L538.3 469.5 L540.3 470.7 L542.3 471.9 L544.3 473.0 L546.3 474.2 L548.3 475.4 L550.3 476.5 L552.3 477.7 L554.3 478.8 L556.4 479.9 L558.4 481.1 L560.4 482.2 L562.5 483.3 L564.5 484.4 L566.6 485.5 L568.6 486.6 L570.7 487.7 L572.7 488.7 L574.8 489.8 L576.8 490.9 L578.9 491.9 L581.0 493.0 L583.0 494.0 L585.1 495.0 L587.2 496.1 L589.3 497.1 L591.4 498.1 L593.5 499.1 L595.5 500.1 L597.6 501.2 L599.7 502.2 L601.8 503.2 L603.9 504.1 L606.0 505.1 L608.1 506.1 L610.2 507.1 L612.3 508.1 L614.4 509.1 L616.6 510.0 L618.7 511.0 L620.8 512.0 L622.9 512.9 L625.0 513.9 L627.1 514.9 L629.2 515.8 L631.4 516.8 L633.5 517.7 L635.6 518.7 L637.7 519.6 L639.8 520.6 L642.0 521.5 L644.1 522.5 L646.2 523.5 L648.3 524.4 L650.4 525.3 L652.6 526.3 L654.7 527.2 L656.8 528.2 L658.9 529.1 L661.1 530.1 L663.2 531.0 L665.3 532.0 L667.4 532.9 L669.6 533.8 L671.7 534.8 L673.8 535.7 L675.9 536.6 L678.1 537.5 L680.2 538.5 L682.3 539.4 L684.5 540.3 L686.6 541.2 L688.7 542.1 L690.9 543.0 L693.0 543.9 L695.2 544.8 L697.3 545.7 L699.4 546.6 L701.6 547.5 L703.7 548.4 L705.9 549.3 L708.0 550.2 L710.2 551.0 L712.3 551.9 L714.5 552.8 L716.7 553.6 L718.8 554.5 L721.0 555.3 L723.1 556.2 L725.3 557.0 L727.5 557.8 L729.6 558.7 L731.8 559.5 L734.0 560.3 L736.1 561.1 L738.3 562.0 L740.5 562.8 L742.7 563.6 L744.8 564.4 L747.0 565.2 L749.2 566.0 L751.4 566.7 L753.6 567.5 L755.8 568.3 L757.9 569.1 L760.1 569.9 L762.3 570.6 L764.5 571.4 L766.7 572.1 L768.9 572.9 L771.1 573.7 L773.3 574.4 L775.5 575.1 L777.7 575.9 L779.9 576.6 L782.1 577.3 L784.3 578.1 L786.5 578.8 L788.7 579.5 L790.9 580.2 L793.1 580.9 L795.4 581.6 L797.6 582.3 L799.8 583.0 L802.0 583.7 L804.2 584.4 L806.4 585.1 L808.7 585.7 L810.9 586.4 L813.1 587.1 L815.3 587.7 L817.6 588.4 L819.8 589.0 L822.0 589.7 L824.2 590.3 L826.5 591.0 L828.7 591.6 L830.9 592.2 L833.2 592.9 L835.4 593.5 L837.6 594.1 L839.9 594.7 L842.1 595.3 L844.4 595.9 L846.6 596.5 L848.8 597.1 L851.1 597.7 L853.3 598.3 L855.6 598.9 L857.8 599.5 L860.1 600.0 L862.3 600.6 L864.6 601.2 L866.8 601.7 L869.1 602.3 L871.3 602.8 L873.6 603.4 L875.8 603.9 L878.1 604.5 L880.4 605.0 L882.6 605.5 L884.9 606.0 L887.1 606.6 L889.4 607.1 L891.7 607.6 L893.9 608.1 L896.2 608.6 L898.5 609.1 L900.7 609.6 L903.0 610.1 L905.3 610.5 L907.5 611.0 L909.8 611.5 L912.1 612.0 L914.4 612.4 L916.6 612.9 L918.9 613.3 L921.2 613.8 L923.5 614.2 L925.7 614.7 L928.0 615.1 L930.3 615.5 L932.6 616.0 L934.9 616.4 L937.1 616.8 L939.4 617.2 L941.7 617.6 L944.0 618.0 L946.3 618.4 L948.6 618.8 L950.9 619.2 L953.2 619.6 L955.4 619.9 L957.7 620.3 L960.0 620.7 L962.3 621.0 L964.6 621.3 L966.9 621.7 L969.2 622.0 L971.5 622.3 L973.8 622.7 L976.1 623.0 L978.4 623.3 L980.7 623.6 L983.0 623.9 L985.3 624.1 L987.6 624.4 L989.9 624.7 L992.3 624.9 L994.6 625.2 L996.9 625.4 L999.2 625.7 L1001.5 625.9 L1003.8 626.1 L1006.1 626.3 L1008.5 626.5 L1010.8 626.7 L1013.1 626.9 L1015.4 627.0 L1017.7 627.2 L1020.1 627.3 L1022.4 627.5 L1024.7 627.6 L1027.0 627.7 L1029.4 627.8 L1031.7 627.9 L1034.0 628.0 L1036.4 628.1 L1038.7 628.2 L1041.0 628.2 L1043.4 628.3 L1045.7 628.3 L1048.0 628.4 L1050.4 628.4 L1052.7 628.4 L1055.1 628.4 L1057.4 628.4 L1059.7 628.3 L1062.1 628.3 L1064.4 628.2 L1066.8 628.1 L1069.1 628.0 L1071.5 627.9 L1073.8 627.8 L1076.1 627.6 L1078.5 627.5 L1080.8 627.3 L1083.1 627.1 L1085.4 626.9 L1087.8 626.6 L1090.1 626.3 L1092.4 626.0 L1094.7 625.7 L1097.0 625.4 L1099.3 625.0 L1101.6 624.6 L1103.9 624.2 L1106.2 623.8 L1108.5 623.3 L1110.8 622.8 L1113.0 622.3 L1115.3 621.8 L1117.5 621.2 L1119.8 620.6 L1122.0 620.0 L1124.3 619.3 L1126.5 618.6 L1128.7 617.9 L1130.9 617.1 L1133.1 616.4 L1135.2 615.6 L1137.4 614.7 L1139.6 613.9 L1141.7 613.0 L1143.8 612.0 L1145.9 611.1 L1148.0 610.1 L1150.1 609.1 L1152.1 608.0 L1154.2 607.0 L1156.2 605.9 L1158.2 604.7 L1160.2 603.6 L1162.1 602.4 L1164.1 601.1 L1166.0 599.9 L1167.9 598.6 L1169.8 597.3 L1171.6 595.9 L1173.4 594.5 L1175.2 593.1 L1177.0 591.7 L1178.8 590.2 L1180.5 588.7 L1182.2 587.2 L1183.9 585.6 L1185.6 584.0 L1187.2 582.4 L1188.8 580.8 L1190.4 579.1 L1192.0 577.4 L1193.5 575.7 L1195.1 574.0 L1196.6 572.2 L1198.0 570.4 L1199.5 568.6 L1200.9 566.8 L1202.3 565.0 L1203.7 563.1 L1205.1 561.2 L1206.4 559.3 L1207.7 557.4 L1209.0 555.4 L1210.3 553.5 L1211.5 551.5 L1212.8 549.5 L1214.0 547.5 L1215.1 545.5 L1216.3 543.5 L1217.4 541.4 L1218.5 539.4 L1219.6 537.3 L1220.7 535.2 L1221.8 533.1 L1222.8 531.0 L1223.8 528.9 L1224.8 526.8 L1225.8 524.6 L1226.7 522.5 L1227.7 520.3 L1228.6 518.2 L1229.5 516.0 L1230.4 513.8 L1231.3 511.7 L1232.1 509.5 L1233.0 507.3 L1233.8 505.1 L1234.6 502.9 L1235.5 500.7 L1236.3 498.5 L1237.0 496.3 L1237.8 494.1 L1238.6 491.8 L1239.3 489.6 L1240.1 487.4 L1240.8 485.2 L1241.6 483.0 L1242.3 480.8 L1243.0 478.6 L1243.7 476.4 L1244.4 474.2 L1245.1 471.9 L1245.8 469.7 L1246.5 467.5 L1247.2 465.3 L1247.8 463.1 L1248.5 460.9 L1249.2 458.7 L1249.8 456.5 L1250.5 454.3 L1251.1 452.1 L1251.8 449.9 L1252.4 447.7 L1253.1 445.5 L1253.7 443.3 L1254.3 441.1 L1255.0 438.9 L1255.6 436.7 L1256.2 434.5 L1256.8 432.3 L1257.4 430.1 L1258.0 427.9 L1258.7 425.7 L1259.3 423.5 L1259.9 421.3 L1260.5 419.1 L1261.1 416.9 L1261.7 414.6 L1262.3 412.4 L1262.9 410.2 L1263.5 408.0 L1264.1 405.8 L1264.7 403.5 L1265.3 401.3 L1265.9 399.1 L1266.5 396.8 L1267.2 394.6 L1267.8 392.3 L1268.4 390.1 L1269.0 387.9 L1269.6 385.6 L1270.2 383.3 L1270.8 381.1 L1271.5 378.8 L1272.1 376.6 L1272.7 374.3 L1273.4 372.0 L1274.0 369.8 L1274.6 367.5 L1275.3 365.2 L1275.9 363.0 L1276.6 360.7 L1277.3 358.4 L1277.9 356.1 L1278.6 353.9 L1279.3 351.6 L1280.0 349.3 L1280.7 347.1 L1281.4 344.8 L1282.1 342.6 L1282.8 340.3 L1283.5 338.1 L1284.3 335.8 L1285.0 333.6 L1285.8 331.3 L1286.5 329.1 L1287.3 326.9 L1288.1 324.6 L1288.9 322.4 L1289.7 320.2 L1290.5 318.0 L1291.4 315.8 L1292.2 313.6 L1293.1 311.4 L1293.9 309.2 L1294.8 307.1 L1295.7 304.9 L1296.6 302.7 L1297.5 300.6 L1298.4 298.4 L1299.4 296.3 L1300.4 294.2 L1301.3 292.1 L1302.3 290.0 L1303.3 287.9 L1304.4 285.8 L1305.4 283.7 L1306.4 281.7 L1307.5 279.6 L1308.6 277.6 L1309.7 275.6 L1310.8 273.6 L1312.0 271.6 L1313.1 269.6 L1314.3 267.6 L1315.5 265.6 L1316.7 263.7 L1318.0 261.8 L1319.2 259.9 L1320.5 258.0 L1321.8 256.1 L1323.1 254.2 L1324.5 252.4 L1325.8 250.5 L1327.2 248.7 L1328.6 246.9 L1330.0 245.1 L1331.5 243.4 L1332.9 241.6 L1334.4 239.9 L1336.0 238.2 L1337.5 236.5 L1339.1 234.8 L1340.7 233.2 L1342.3 231.5 L1343.9 229.9 L1345.6 228.3 L1347.3 226.8 L1349.0 225.2 L1350.7 223.7 L1352.5 222.2 L1354.2 220.7 L1356.0 219.2 L1357.9 217.8 L1359.7 216.4 L1361.6 215.0 L1363.4 213.7 L1365.3 212.4 L1367.3 211.1 L1369.2 209.8 L1371.2 208.6 L1373.2 207.4 L1375.2 206.2 L1377.2 205.1 L1379.2 204.0 L1381.3 202.9 L1383.3 201.8 L1385.4 200.8 L1387.5 199.9 L1389.6 198.9 L1391.8 198.0 L1393.9 197.2 L1396.1 196.3 L1398.2 195.5 L1400.4 194.8 L1402.6 194.1 L1404.9 193.4 L1407.1 192.8 L1409.3 192.2 L1411.6 191.6 L1413.8 191.1 L1416.1 190.7 L1418.4 190.2 L1420.7 189.9 L1423.0 189.5 L1425.3 189.2 L1427.6 189.0 L1430.0 188.8 L1432.3 188.7 L1434.7 188.6 L1437.0 188.5 L1439.4 188.5 L1441.8 188.6 L1444.1 188.7 L1446.5 188.8 L1448.9 189.0 L1451.3 189.3 L1453.7 189.6 L1456.1 190.0 L1458.5 190.4 L1460.9 190.9 L1463.3 191.4" stroke="#1ee0c0" stroke-width="1.25" fill="none" shape-rendering="crispEdges"/>
<path d="M915.63 784.44 L1476.63 192.44 L1469.37 185.56 L908.37 777.56Z" fill="#ffffff" shape-rendering="crispEdges"/>
<path d="M914.83 783.68 L1475.07 192.48 L1469.41 187.12 L909.17 778.32Z" fill="#ac00f0" shape-rendering="crispEdges"/>
<circle cx="1469.5" cy="185.5" r="2.3" fill="#20e0e8"/>
<circle cx="1476.5" cy="192.5" r="2.3" fill="#20e0e8"/>
</g>
</svg>
<svg style="left:0;top:0" width="1920" height="300"><path d="M1773 97 l11 21.5 h-22 z" fill="#8a7828" stroke="#0a0a1e" stroke-width="2" stroke-linejoin="round"/><path d="M1773 215 l11 -21.5 h-22 z" fill="#8a7828" stroke="#0a0a1e" stroke-width="2" stroke-linejoin="round"/><path d="M1714 156 l22 -11 v22 z" fill="#8a7828" stroke="#0a0a1e" stroke-width="2" stroke-linejoin="round"/><path d="M1832 156 l-22 -11 v22 z" fill="#8a7828" stroke="#0a0a1e" stroke-width="2" stroke-linejoin="round"/><rect x="1734.8" y="109.5" width="4.4" height="6" transform="rotate(0 1737 120)" fill="#8a7828" stroke="#0a0a1e" stroke-width="1.2"/><rect x="1734.8" y="109.5" width="4.4" height="6" transform="rotate(45 1737 120)" fill="#8a7828" stroke="#0a0a1e" stroke-width="1.2"/><rect x="1734.8" y="109.5" width="4.4" height="6" transform="rotate(90 1737 120)" fill="#8a7828" stroke="#0a0a1e" stroke-width="1.2"/><rect x="1734.8" y="109.5" width="4.4" height="6" transform="rotate(135 1737 120)" fill="#8a7828" stroke="#0a0a1e" stroke-width="1.2"/><rect x="1734.8" y="109.5" width="4.4" height="6" transform="rotate(180 1737 120)" fill="#8a7828" stroke="#0a0a1e" stroke-width="1.2"/><rect x="1734.8" y="109.5" width="4.4" height="6" transform="rotate(225 1737 120)" fill="#8a7828" stroke="#0a0a1e" stroke-width="1.2"/><rect x="1734.8" y="109.5" width="4.4" height="6" transform="rotate(270 1737 120)" fill="#8a7828" stroke="#0a0a1e" stroke-width="1.2"/><rect x="1734.8" y="109.5" width="4.4" height="6" transform="rotate(315 1737 120)" fill="#8a7828" stroke="#0a0a1e" stroke-width="1.2"/><circle cx="1737" cy="120" r="7.3" fill="none" stroke="#0a0a1e" stroke-width="1.2"/><circle cx="1737" cy="120" r="5.5" fill="none" stroke="#8a7828" stroke-width="4.5"/><rect x="1735.4" y="110.2" width="3.2" height="5" transform="rotate(0 1737 120)" fill="#8a7828"/><rect x="1735.4" y="110.2" width="3.2" height="5" transform="rotate(45 1737 120)" fill="#8a7828"/><rect x="1735.4" y="110.2" width="3.2" height="5" transform="rotate(90 1737 120)" fill="#8a7828"/><rect x="1735.4" y="110.2" width="3.2" height="5" transform="rotate(135 1737 120)" fill="#8a7828"/><rect x="1735.4" y="110.2" width="3.2" height="5" transform="rotate(180 1737 120)" fill="#8a7828"/><rect x="1735.4" y="110.2" width="3.2" height="5" transform="rotate(225 1737 120)" fill="#8a7828"/><rect x="1735.4" y="110.2" width="3.2" height="5" transform="rotate(270 1737 120)" fill="#8a7828"/><rect x="1735.4" y="110.2" width="3.2" height="5" transform="rotate(315 1737 120)" fill="#8a7828"/><circle cx="1737" cy="120" r="3" fill="none" stroke="#0a0a1e" stroke-width="1"/><path d="M1808.5 108.5 l11 9.5 h-2.5 v13 h-17 v-13 h-2.5 z" fill="#8a7828" stroke="#0a0a1e" stroke-width="1.6" stroke-linejoin="round"/><path d="M1806.5 130.5 v-7 h4 v7" fill="none" stroke="#3c3a30" stroke-width="1.2"/><path d="M1727 181 l15 1 l-3 3 q5 3 8 8 l-1 9 q-6 -8 -13 -11 l-3 3 z" fill="#8a7828" stroke="#0a0a1e" stroke-width="1.6" stroke-linejoin="round"/><path d="M1819 181 l-15 1 l3 3 q-5 3 -8 8 l1 9 q6 -8 13 -11 l3 3 z" fill="#8a7828" stroke="#0a0a1e" stroke-width="1.6" stroke-linejoin="round"/><path d="M1746 156 l26 -26 l27.5 27 l-26 26 z" fill="#8e8eae" stroke="#1a1a22" stroke-width="0.8"/><path d="M1746 156 l26 -26 l3 1 l-25.5 25.5 z" fill="#a8a8c0" stroke="#1a1a22" stroke-width="0.5"/><path d="M1746 156 l3.5 0.5 l24.5 24.5 l-0.5 2.5 z" fill="#a8a8c0" stroke="#1a1a22" stroke-width="0.5"/><path d="M1757 146 l7 -8" stroke="#30c030" stroke-width="1"/><path d="M1757 164 l5 5 M1762 170 l3 3" stroke="#3030e0" stroke-width="1.2"/><g transform="rotate(-45 1776 156)"><text x="1777" y="165" font-family="Liberation Sans" font-weight="bold" font-size="24" text-anchor="middle" fill="#c4345c" stroke="#202030" stroke-width="0.6">−X</text></g></svg>
<div class="a" style="left:1881px;top:89px;width:1px;height:895px;background:#6a6e72"></div><svg style="left:0;top:0" width="1920" height="1035"><path d="M1873 95.5 l-4 4 l4 4 M1877 95.5 l-4 4 l4 4" fill="none" stroke="#5aa8e8" stroke-width="1.6"/><rect x="1856" y="115" width="2" height="2" fill="#7d8083"/><rect x="1859" y="115" width="2" height="2" fill="#7d8083"/><rect x="1862" y="115" width="2" height="2" fill="#7d8083"/><rect x="1865" y="115" width="2" height="2" fill="#7d8083"/><rect x="1868" y="115" width="2" height="2" fill="#7d8083"/><rect x="1871" y="115" width="2" height="2" fill="#7d8083"/><rect x="1856" y="118" width="2" height="2" fill="#7d8083"/><rect x="1859" y="118" width="2" height="2" fill="#7d8083"/><rect x="1862" y="118" width="2" height="2" fill="#7d8083"/><rect x="1865" y="118" width="2" height="2" fill="#7d8083"/><rect x="1868" y="118" width="2" height="2" fill="#7d8083"/><rect x="1871" y="118" width="2" height="2" fill="#7d8083"/><rect x="1893" y="94" width="2" height="2" fill="#7d8083"/><rect x="1896" y="94" width="2" height="2" fill="#7d8083"/><rect x="1899" y="94" width="2" height="2" fill="#7d8083"/><rect x="1902" y="94" width="2" height="2" fill="#7d8083"/><rect x="1905" y="94" width="2" height="2" fill="#7d8083"/><rect x="1908" y="94" width="2" height="2" fill="#7d8083"/><rect x="1893" y="97" width="2" height="2" fill="#7d8083"/><rect x="1896" y="97" width="2" height="2" fill="#7d8083"/><rect x="1899" y="97" width="2" height="2" fill="#7d8083"/><rect x="1902" y="97" width="2" height="2" fill="#7d8083"/><rect x="1905" y="97" width="2" height="2" fill="#7d8083"/><rect x="1908" y="97" width="2" height="2" fill="#7d8083"/><g transform="translate(1851,130)"><rect x="1" y="1" width="21" height="21" fill="none" stroke="#e02808" stroke-width="2.4"/>
<path d="M5 3 v14 l3.5 -3 l2.5 5 l2 -1 l-2.5 -5 h4.5z" fill="#e6e6e6" stroke="#bbb" stroke-width="0.5"/><path d="M16 6 h5 M18.5 3.5 v5" stroke="#000" stroke-width="1.8"/></g><g transform="translate(1851,161)"><rect x="1" y="1" width="21" height="21" fill="none" stroke="#e02808" stroke-width="2.4"/>
<path d="M5 3 v14 l3.5 -3 l2.5 5 l2 -1 l-2.5 -5 h4.5z" fill="#e6e6e6" stroke="#bbb" stroke-width="0.5"/><path d="M16 6 h5" stroke="#000" stroke-width="1.8"/></g><g transform="translate(1851,197)"><rect x="1" y="1" width="21" height="11" fill="none" stroke="#e02808" stroke-width="2.2"/><path d="M11.5 1 v11" stroke="#e02808" stroke-width="2"/><rect x="13" y="2.5" width="7.5" height="8" fill="#54b838"/></g><g transform="translate(1851,223)"><path d="M8 1 h7 v7 h7 v7 h-7 v7 h-7 v-7 h-7 v-7 h7z" fill="none" stroke="#e02808" stroke-width="2"/>
<path d="M11.5 1 v21 M1 11.5 h21 M8 8 h7 v7 h-7z" stroke="#e02808" stroke-width="1.5" fill="none"/>
<rect x="9.5" y="2.5" width="4" height="4" fill="#54b838"/><rect x="9.5" y="16.5" width="4" height="4" fill="#54b838"/><rect x="2.5" y="9.5" width="4" height="4" fill="#54b838"/><rect x="16.5" y="9.5" width="4" height="4" fill="#54b838"/></g><g transform="translate(1851,254)"><rect x="1" y="1" width="21" height="11" fill="none" stroke="#e02808" stroke-width="2.2"/><path d="M11.5 1 v11" stroke="#e02808" stroke-width="2"/><rect x="13" y="2.5" width="7.5" height="8" fill="#54b838"/>
<path d="M0 22 h23 M0 22 l16 -14" stroke="#000" stroke-width="1.8"/><path d="M12 22 q0 -5 -3 -7" fill="none" stroke="#000" stroke-width="1.5"/></g><rect x="1853" y="286" width="19" height="1" fill="#383c40"/><g transform="translate(1851,291)"><path d="M5 5 l6 11 l6 -11" stroke="#8a8c8e" stroke-width="1" fill="none"/><circle cx="4.5" cy="4.5" r="4.5" fill="#8a8c8e"/><circle cx="18.5" cy="4.5" r="4.5" fill="#8a8c8e"/><circle cx="11.5" cy="17" r="4.5" fill="#8a8c8e"/><path d="M20.5 21 v-9 M18 14.5 l2.5 -3 l2.5 3" stroke="#8a8c8e" stroke-width="1" fill="none"/></g><g transform="translate(1851,322)"><path d="M11.5 5 l-6 11 M11.5 5 l6 11" stroke="#e01010" stroke-width="1.2"/><circle cx="11.5" cy="4.5" r="4.2" fill="#56b830"/><circle cx="4.5" cy="17.5" r="4.5" fill="#10b8c0"/><circle cx="18.5" cy="17.5" r="4.5" fill="#10b8c0"/><path d="M20.5 0 v8 M18 5.5 l2.5 3 l2.5 -3" stroke="#e01010" stroke-width="1.3" fill="none"/></g><g transform="translate(1851,353)"><path d="M1.5 10 l9 -8.5 q2 4 11 8 l-10 11 q-4 -7 -10 -10.5z" fill="none" stroke="#9a9c9e" stroke-width="2.2"/></g><g transform="translate(1851,383)"><path d="M4 6 l5 -5 h14 l-5 5z" fill="#bfe4f4" stroke="#8cc8e8" stroke-width="0.6"/><path d="M6 3.5 h12 M9 2 l-3 4 M13 2 l-3 4 M17 2 l-3 4" stroke="#fff" stroke-width="0.5"/>
<path d="M1 13 l5 -5 h15 v11 l-5 5 h-15z" fill="#3a62a8"/><path d="M1 13 l5 -5 h15 l-5 5z" fill="#a8c8ec"/>
<path d="M3 16 h12 M3 19 h12 M3 22 h12 M5 13 v11 M8 13 v11 M11 13 v11 M14 13 v11" stroke="#8cb0e0" stroke-width="0.6"/><path d="M20 24 h5 l-2.5 2.5z" fill="#b8babc"/></g><rect x="1853" y="416" width="19" height="1" fill="#383c40"/><g transform="translate(1851,421)"><rect x="1.5" y="1.5" width="20" height="20" fill="none" stroke="#7a7c7e" stroke-width="2.4"/>
<path d="M5 6 v14 l3.5 -3 l2.5 5 l2 -1 l-2.5 -5 h4.5z" fill="#d8d8d8" stroke="#aaa" stroke-width="0.5"/><path d="M12 5 q2 -1 4 0 q2 1 4 0 M12 8 q2 -1 4 0 q2 1 4 0" stroke="#555" stroke-width="0.7" fill="none"/></g><g transform="translate(1851,452)"><rect x="1.5" y="1.5" width="20" height="21" fill="none" stroke="#e02808" stroke-width="2.4"/>
<path d="M5 8 v14 l3.5 -3 l2.5 5 l2 -1 l-2.5 -5 h4.5z" fill="#e6e6e6" stroke="#aaa" stroke-width="0.5"/>
<circle cx="16" cy="7" r="5.5" fill="none" stroke="#b4b6b8" stroke-width="3" stroke-dasharray="2.2 1.6"/><circle cx="16" cy="7" r="3.5" fill="#b4b6b8"/><circle cx="16" cy="7" r="1.3" fill="#666"/></g><g transform="translate(1851,483)"><defs><linearGradient id="lg1" x1="0" y1="0" x2="0" y2="1"><stop offset="0" stop-color="#e870b8"/><stop offset="0.3" stop-color="#e870b8"/><stop offset="0.55" stop-color="#60c040"/><stop offset="0.8" stop-color="#80d8f0"/><stop offset="1" stop-color="#80d8f0"/></linearGradient></defs>
<rect x="1" y="1" width="9" height="22" fill="url(#lg1)" stroke="#aaa" stroke-width="0.6"/>
<path d="M10 3 h6 v3 h5 v3 h2 v6 h-2 v3 h-5 v3 h-6" fill="none" stroke="#a0a2a4" stroke-width="1.1"/><path d="M10 9 h11 M10 12 h13 M10 15 h11" stroke="#a0a2a4" stroke-width="1.1"/></g><rect x="1853" y="515" width="19" height="1" fill="#383c40"/><g transform="translate(1851,521)"><path d="M4 18 a10 10 0 1 1 16 -2" fill="none" stroke="#3c3f42" stroke-width="1"/><circle cx="10" cy="10" r="7" fill="#6ac0e8" stroke="#d8d8d8" stroke-width="1.5"/><circle cx="8.5" cy="8" r="3" fill="#b8e4f8"/><path d="M14.5 15 l5 5" stroke="#c8a830" stroke-width="3"/></g><g transform="translate(1888,105)"><path d="M3 3 v19 h19" fill="none" stroke="#e02808" stroke-width="2"/><path d="M3 0 l-3.5 5 h7z M23 22 l-5 -3.5 v7z" fill="#e02808"/><text x="15" y="15" font-family="Liberation Sans" font-weight="bold" font-size="14" text-anchor="middle" fill="#000">+X</text></g><g transform="translate(1888,137)"><path d="M3 3 v19 h19" fill="none" stroke="#e02808" stroke-width="2"/><path d="M3 0 l-3.5 5 h7z M23 22 l-5 -3.5 v7z" fill="#e02808"/><text x="15" y="15" font-family="Liberation Sans" font-weight="bold" font-size="14" text-anchor="middle" fill="#000">−X</text></g><g transform="translate(1888,169)"><path d="M3 3 v19 h19" fill="none" stroke="#e02808" stroke-width="2"/><path d="M3 0 l-3.5 5 h7z M23 22 l-5 -3.5 v7z" fill="#e02808"/><text x="15" y="15" font-family="Liberation Sans" font-weight="bold" font-size="14" text-anchor="middle" fill="#000">+Y</text></g><g transform="translate(1888,201)"><path d="M3 3 v19 h19" fill="none" stroke="#e02808" stroke-width="2"/><path d="M3 0 l-3.5 5 h7z M23 22 l-5 -3.5 v7z" fill="#e02808"/><text x="15" y="15" font-family="Liberation Sans" font-weight="bold" font-size="14" text-anchor="middle" fill="#000">−Y</text></g><g transform="translate(1888,233)"><path d="M3 3 v19 h19" fill="none" stroke="#e02808" stroke-width="2"/><path d="M3 0 l-3.5 5 h7z M23 22 l-5 -3.5 v7z" fill="#e02808"/><text x="15" y="15" font-family="Liberation Sans" font-weight="bold" font-size="14" text-anchor="middle" fill="#000">+Z</text></g><g transform="translate(1888,265)"><path d="M3 3 v19 h19" fill="none" stroke="#e02808" stroke-width="2"/><path d="M3 0 l-3.5 5 h7z M23 22 l-5 -3.5 v7z" fill="#e02808"/><text x="15" y="15" font-family="Liberation Sans" font-weight="bold" font-size="14" text-anchor="middle" fill="#000">-Z</text></g><rect x="1890" y="297" width="19" height="1" fill="#383c40"/><g transform="translate(1888,304)"><path d="M3 3 v19 h19" fill="none" stroke="#e02808" stroke-width="2"/><path d="M3 0 l-3.5 5 h7z M23 22 l-5 -3.5 v7z" fill="#e02808"/>
<text x="15" y="17" font-family="Liberation Sans" font-weight="bold" font-size="15" text-anchor="middle" fill="#000">n</text><path d="M12 4 l3 -2.5 l3 2.5" fill="none" stroke="#000" stroke-width="1.4"/></g><rect x="1890" y="337" width="19" height="1" fill="#383c40"/><g transform="translate(1888,343)"><circle cx="12" cy="11.5" r="11" fill="#12b0b8"/><path d="M1 11.5 h22 M12 0.5 v22 M3 6 h18 M3 17 h18" stroke="#0a6a72" stroke-width="0.8"/><ellipse cx="12" cy="11.5" rx="5" ry="11" fill="none" stroke="#0a6a72" stroke-width="0.8"/><ellipse cx="8" cy="16" rx="7.5" ry="4.8" fill="#ffffff" stroke="#222" stroke-width="0.8"/><circle cx="8" cy="16" r="3.3" fill="#333"/><circle cx="7" cy="14.8" r="1" fill="#ddd"/></g><g transform="translate(1888,377)"><path d="M1 10 l11 -9 l12 9 l-11 9z" fill="#a4d8f0" stroke="#7ac0e0" stroke-width="0.8"/><ellipse cx="7.5" cy="13" rx="7.5" ry="4.8" fill="#ffffff" stroke="#222" stroke-width="0.8"/><circle cx="7.5" cy="13" r="3.3" fill="#333"/><circle cx="6.5" cy="11.8" r="1" fill="#ddd"/></g><g transform="translate(1888,407)"><path d="M2 21 q10 0 18 -18" fill="none" stroke="#40b030" stroke-width="2"/><circle cx="20" cy="3" r="2.6" fill="#40b030"/><ellipse cx="8" cy="17" rx="7.5" ry="4.8" fill="#ffffff" stroke="#222" stroke-width="0.8"/><circle cx="8" cy="17" r="3.3" fill="#333"/><circle cx="7" cy="15.8" r="1" fill="#ddd"/></g><g transform="translate(1888,439)"><circle cx="15" cy="3" r="2.5" fill="#48b030"/><circle cx="6" cy="10" r="2.5" fill="#48b030"/><circle cx="19" cy="15" r="2.5" fill="#48b030"/><ellipse cx="7.5" cy="17" rx="7.5" ry="4.8" fill="#ffffff" stroke="#222" stroke-width="0.8"/><circle cx="7.5" cy="17" r="3.3" fill="#333"/><circle cx="6.5" cy="15.8" r="1" fill="#ddd"/></g><g transform="translate(1888,471)"><path d="M1 10 l10 -10 q4 4 5 5 l6 10 l-10 8 l-1 -6z" fill="#e07cb8"/><ellipse cx="7.5" cy="17" rx="7.5" ry="4.8" fill="#ffffff" stroke="#222" stroke-width="0.8"/><circle cx="7.5" cy="17" r="3.3" fill="#333"/><circle cx="6.5" cy="15.8" r="1" fill="#ddd"/></g><g transform="translate(1888,503)"><path d="M12 0 l2.5 7 l7.5 2 l-7.5 3 l-2.5 7 l-2.5 -7 l-7.5 -3 l7.5 -2z" fill="#f0d018"/><ellipse cx="7.5" cy="17" rx="7.5" ry="4.8" fill="#ffffff" stroke="#222" stroke-width="0.8"/><circle cx="7.5" cy="17" r="3.3" fill="#333"/><circle cx="6.5" cy="15.8" r="1" fill="#ddd"/></g><g transform="translate(1888,535)"><rect x="3" y="0.5" width="19" height="17" fill="none" stroke="#1a5cf0" stroke-width="1.2"/><path d="M7.5 0.5 v17 M12 0.5 v17 M16.5 0.5 v17 M3 4.5 h19 M3 9 h19 M3 13 h19" stroke="#1a5cf0" stroke-width="1"/>
<rect x="0.5" y="4.5" width="16" height="18" fill="none" stroke="#10a8a8" stroke-width="1.2"/><path d="M4.5 4.5 v18 M8.5 4.5 v18 M12.5 4.5 v18 M0.5 9 h16 M0.5 13.5 h16 M0.5 18 h16" stroke="#10a8a8" stroke-width="1"/><ellipse cx="7.5" cy="15" rx="7.5" ry="4.8" fill="#ffffff" stroke="#222" stroke-width="0.8"/><circle cx="7.5" cy="15" r="3.3" fill="#333"/><circle cx="6.5" cy="13.8" r="1" fill="#ddd"/></g><g transform="translate(1888,567)"><path d="M3 16 v-13 M5 19 l15 -15 M9 20 h12" stroke="#e02808" stroke-width="2"/><path d="M3 0 l-3 5 h6z M22 1 l-1.5 6 l-4.5 -4.5z M23 20 l-5 -3 v6z" fill="#e02808"/><ellipse cx="7.5" cy="17" rx="7.5" ry="4.8" fill="#ffffff" stroke="#222" stroke-width="0.8"/><circle cx="7.5" cy="17" r="3.3" fill="#333"/><circle cx="6.5" cy="15.8" r="1" fill="#ddd"/></g><g transform="translate(1888,599)"><path d="M3 16 v-13 M5 19 l15 -15 M9 20 h12" stroke="#c0d0e0" stroke-width="2.6"/><path d="M3 0 l-3.5 5 h7z M23 0.5 l-1.5 7 l-5.5 -5.5z M23.5 20 l-5.5 -3.5 v7z" fill="#c0d0e0"/><ellipse cx="7.5" cy="17" rx="7.5" ry="4.8" fill="#ffffff" stroke="#222" stroke-width="0.8"/><path d="M5.0 14.5 l5 5 M10.0 14.5 l-5 5" stroke="#222" stroke-width="1.2"/></g><g transform="translate(1888,631)"><path d="M8 6 l7 -5 l8 4 v10 l-7 5 l-8 -4z" fill="#d8b810"/><path d="M8 6 l7 -5 l8 4 l-7 5z" fill="#808080"/><path d="M16 10 v10" stroke="#a08800" stroke-width="0.6"/><ellipse cx="7.5" cy="17" rx="7.5" ry="4.8" fill="#ffffff" stroke="#222" stroke-width="0.8"/><circle cx="7.5" cy="17" r="3.3" fill="#333"/><circle cx="6.5" cy="15.8" r="1" fill="#ddd"/></g><g transform="translate(1888,663)"><path d="M6 0 v22 M16 0 v22 M0 6 h22 M0 16 h22" stroke="#e8e8e8" stroke-width="2"/><ellipse cx="7.5" cy="17" rx="7.5" ry="4.8" fill="#ffffff" stroke="#222" stroke-width="0.8"/><path d="M5.0 14.5 l5 5 M10.0 14.5 l-5 5" stroke="#222" stroke-width="1.2"/></g></svg>
<div class="a" style="left:406px;top:767px;width:1434px;height:25px;background:#2a2e32"></div>
<div class="t" style="left:410px;top:777px">Messages</div>
<div class="a" style="left:406px;top:792px;width:1434px;height:192px;background:#1b1e20;border-top:2px solid #68737e;border-left:2px solid #68737e;border-right:2px solid #2a2e32;border-bottom:1px solid #2a2e32"></div>
<svg style="left:1812px;top:776px" width="28" height="13">
<rect x="1.5" y="1.5" width="10" height="10" fill="none" stroke="#9a9c9e" rx="1"/><rect x="3.5" y="5.5" width="4" height="4" fill="none" stroke="#9a9c9e"/><path d="M5.5 5.5 v-2 h4 v4 h-2" fill="none" stroke="#9a9c9e"/>
<rect x="15.5" y="1.5" width="10" height="10" fill="none" stroke="#9a9c9e" rx="1"/><path d="M17 3 l7 7 M24 3 l-7 7" stroke="#9a9c9e"/></svg>
<div class="a" style="left:1825px;top:794px;width:13px;height:189px;background:#3a3e42;border:1px solid #25282b"></div>
<svg style="left:1825px;top:794px" width="13" height="189"><rect x="0.5" y="0.5" width="12" height="13" fill="#3f4347" stroke="#54585c"/><path d="M3 9 l3.5 -4 l3.5 4z" fill="#c8c9ca"/><rect x="0.5" y="175.5" width="12" height="13" fill="#3f4347" stroke="#54585c"/><path d="M3 180 l3.5 4 l3.5 -4z" fill="#c8c9ca"/><rect x="0.5" y="133.5" width="12" height="40" fill="#474b4f" stroke="#5a5e62"/></svg>
<div class="t" style="left:412px;top:794px"><span style="color:#108c10">Info: </span>Created <span style="color:#2d9de6;text-decoration:underline;text-underline-offset:2px">10 Connectors</span>.</div>
<div class="t" style="left:412px;top:811px"><span style="color:#108c10">Info: </span>Joined 2 connectors into <span style="color:#2d9de6;text-decoration:underline;text-underline-offset:2px">1 connector</span>.</div>
<div class="t" style="left:412px;top:828px"><span style="color:#108c10">Info: </span>Undoing: Join</div>
<div class="t" style="left:412px;top:845px"><span style="color:#108c10">Info: </span>Joined 2 connectors into <span style="color:#2d9de6;text-decoration:underline;text-underline-offset:2px">1 connector</span>.</div>
<div class="t" style="left:412px;top:862px"><span style="color:#108c10">Info: </span>Dimensioned connector <span style="color:#2d9de6;text-decoration:underline;text-underline-offset:2px">con-8</span>.</div>
<div class="t" style="left:412px;top:879px"><span style="color:#108c10">Info: </span>Dimensioned connector <span style="color:#2d9de6;text-decoration:underline;text-underline-offset:2px">con-10</span>.</div>
<div class="t" style="left:412px;top:896px"><span style="color:#108c10">Info: </span>Dimensioned <span style="color:#2d9de6;text-decoration:underline;text-underline-offset:2px">2 connectors</span>.</div>
<div class="t" style="left:412px;top:913px"><span style="color:#108c10">Info: </span>Dimensioned connector <span style="color:#2d9de6;text-decoration:underline;text-underline-offset:2px">con-2</span>.</div>
<div class="t" style="left:412px;top:930px"><span style="color:#108c10">Info: </span>Dimensioned <span style="color:#2d9de6;text-decoration:underline;text-underline-offset:2px">2 connectors</span>.</div>
<div class="t" style="left:412px;top:947px"><span style="color:#108c10">Info: </span>Dimensioned <span style="color:#2d9de6;text-decoration:underline;text-underline-offset:2px">2 connectors</span>.</div>
<div class="t" style="left:412px;top:964px"><span style="color:#108c10">Info: </span>Created <span style="color:#2d9de6;text-decoration:underline;text-underline-offset:2px">1 domain</span>.</div>
<svg style="left:0;top:0" width="1" height="1"><rect x="1116" y="769" width="2" height="2" fill="#8a8c8e"/><rect x="1119" y="769" width="2" height="2" fill="#8a8c8e"/><rect x="1122" y="769" width="2" height="2" fill="#8a8c8e"/><rect x="1125" y="769" width="2" height="2" fill="#8a8c8e"/><rect x="1128" y="769" width="2" height="2" fill="#8a8c8e"/><rect x="1131" y="769" width="2" height="2" fill="#8a8c8e"/></svg>
<div class="a" style="left:0;top:984px;width:1920px;height:51px;background:#2a2e32"></div>
<svg style="left:5px;top:1000px" width="20" height="20"><path d="M6 1 h7 l5 5 v7 l-5 5 h-7 l-5 -5 v-7 z" fill="#8e9092"/><path d="M6 1 h7 l5 5 v3 h-17 v-3 z" fill="#a4a6a8"/></svg>
<div class="a" style="left:28px;top:993px;width:100px;height:14px;background:#1e2124;border-radius:3px"></div>
<div class="a" style="left:28px;top:1013px;width:100px;height:14px;background:#1e2124;border-radius:3px"></div>
<svg style="left:142px;top:991px" width="16" height="16"><rect x="0" y="0" width="15" height="15" fill="#10c0c8"/><path d="M3.75 0 v15 M7.5 0 v15 M11.25 0 v15 M0 3.75 h15 M0 7.5 h15 M0 11.25 h15" stroke="#08808a" stroke-width="0.8"/></svg>
<svg style="left:163px;top:991px" width="16" height="16"><path d="M1 4 l3 -3 h10 v10 l-3 3 h-10 z" fill="#c01010"/><path d="M1 4 h10 v10" fill="none" stroke="#e04040" stroke-width="0.6"/><path d="M11 4 l3 -3" stroke="#800" /></svg>
<div class="t" style="left:188px;top:994px;color:#000;font-weight:bold;font-size:11px">2D</div>
<div class="t" style="left:145px;top:1015px;transform:scaleX(0.86);transform-origin:0 0;font-size:13px">CGNS</div>
<svg style="left:0;top:0" width="1920" height="1035">
<rect x="8" y="198" width="380" height="43" rx="1.5" fill="none" stroke="#00ff00" stroke-width="4"/>
<rect x="14" y="311" width="374" height="123" rx="1.5" fill="none" stroke="#00ff00" stroke-width="4"/>
<rect x="763" y="55" width="39" height="31" rx="2" fill="none" stroke="#00ff00" stroke-width="4"/>
<path d="M386 201.5 L586 205" stroke="#00ff00" stroke-width="4" stroke-linecap="round"/>
<path d="M386 365 L586 369" stroke="#00ff00" stroke-width="4" stroke-linecap="round"/>
<path d="M794 86 L787.5 194" stroke="#00ff00" stroke-width="4" stroke-linecap="round"/>
</svg><div class="t" style="left:613px;top:190px;font-size:40px;line-height:40px;color:#00ff00">3</div><div class="t" style="left:790px;top:219px;font-size:40px;line-height:40px;color:#00ff00">2</div><svg style="left:0;top:0" width="1" height="1"><path d="M619 399 V369.5 h-1.5 q-2.5 4 -6.8 6.5 l1.6 2.6 q3 -1.8 5 -4 V399z" fill="#00ff00" stroke="#00ff00" stroke-width="1.2"/></svg></body></html>
